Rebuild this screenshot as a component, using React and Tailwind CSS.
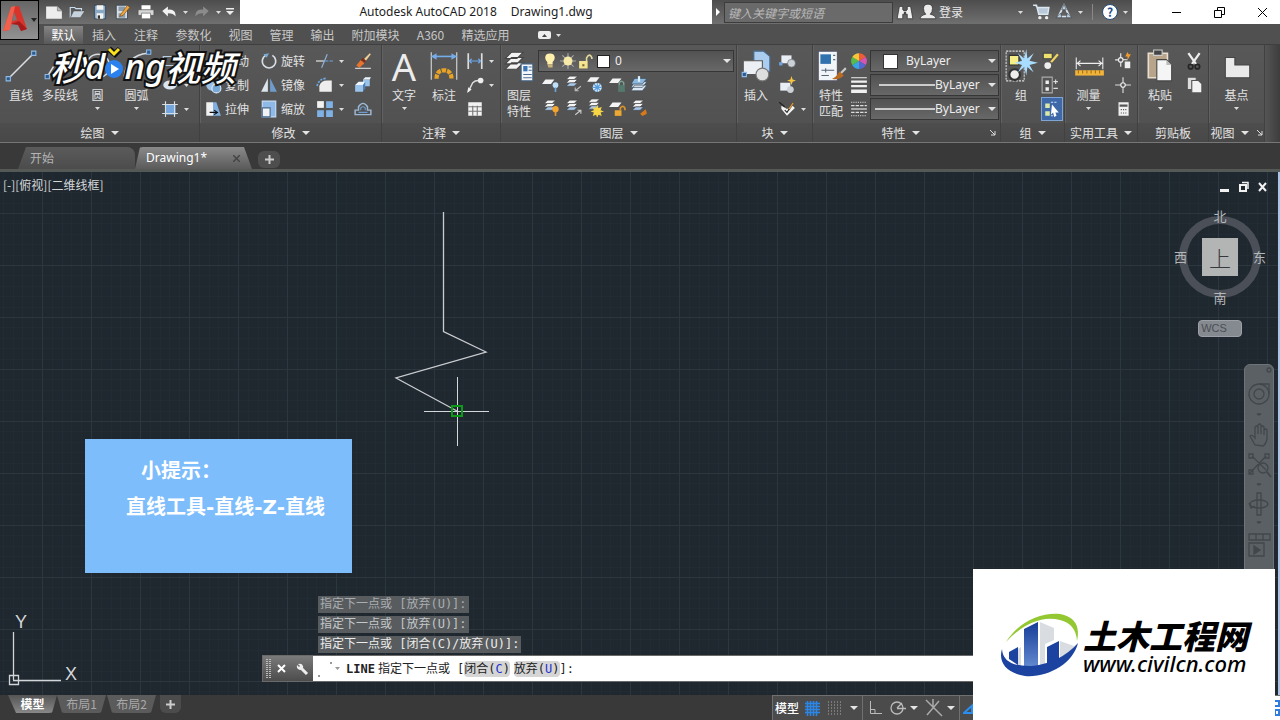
import { useState } from 'react';

const SmallIcon = ({ children }) => (
    <svg width="18" height="18" viewBox="0 0 16 16" fill="none" className="shrink-0">{children}</svg>
);
const BigIcon = ({ children }) => (
    <svg width="34" height="34" viewBox="0 0 32 32" fill="none" className="shrink-0">{children}</svg>
);

const Caret = ({ className = '' }) => (
    <svg width="8" height="4" viewBox="0 0 8 4" className={`shrink-0 fill-[#e4e4e4] ${className}`}><path d="M0 0h8L4 4z" /></svg>
);
const MiniCaret = () => (
    <svg width="5" height="3" viewBox="0 0 5 3" className="shrink-0 fill-[#dcdcdc]"><path d="M0 0h5L2.500 3z" /></svg>
);

const sheets = (y) => (
    <>
        <path d={`M5 ${y}h7l-3 3H2z`} fill="#f4f4f4" stroke="#3b3b3b" strokeWidth=".5" />
        <path d={`M5 ${y + 3}h7l-3 3H2z`} fill="#f4f4f4" stroke="#3b3b3b" strokeWidth=".5" />
        <path d={`M5 ${y + 6}h7l-3 3H2z`} fill="#a8c8ea" stroke="#3b3b3b" strokeWidth=".5" />
    </>
);

const quickTools = [
    ['新建', <><path d="M1 3h10l4 4v7H1z" fill="#ededed" /><path d="M11 3v4h4" fill="#b5b5b5" stroke="#777" strokeWidth=".6" /></>],
    ['打开', <><path d="M2 13V4h4l1 1h5v3" stroke="#c9dced" /><path d="M2 13 5 7h10l-4 6z" fill="#c7d2dc" stroke="#444" strokeWidth=".5" /></>],
    ['保存', <><path d="M3 2h10v12H3z" fill="#8aa8c4" stroke="#2d3e50" strokeWidth=".7" /><path d="M5 2h6v4H5zM5 9h6v5H5z" fill="#f4f4f4" /><path d="M6 11h2v3H6z" fill="#333" /></>],
    ['另存为', <><path d="M2 2h10v12H2z" fill="#d8dde2" stroke="#2d3e50" strokeWidth=".7" /><path d="M4 3h6v4H4zM4 9h6v4H4z" fill="#8a9cad" /><path d="m6 10 6-8 2 2-6 7-3 1z" fill="#f0a63a" stroke="#6b3c0a" strokeWidth=".5" /></>],
    ['打印', <><path d="M4 2h8v4H4z" fill="#fff" /><path d="M1 6h14v5H1z" fill="#d7d7d7" stroke="#444" strokeWidth=".5" /><path d="M4 9h8v5H4z" fill="#fff" stroke="#666" strokeWidth=".6" /></>],
];

const menuTabs = [
    { name: '默认', width: 'w-[39px]' },
    { name: '插入', width: 'w-[42px]' },
    { name: '注释', width: 'w-[42px]' },
    { name: '参数化', width: 'w-[53px]' },
    { name: '视图', width: 'w-[41px]' },
    { name: '管理', width: 'w-[41px]' },
    { name: '输出', width: 'w-[41px]' },
    { name: '附加模块', width: 'w-[65px]' },
    { name: 'A360', width: 'w-[45px]' },
    { name: '精选应用', width: 'w-[65px]' },
];

const layerTools = [
    <><path d="M3 4h8L8 8H0z" fill="#f4f4f4" /><circle cx="12" cy="9" r="2.500" fill="#bfe0fb" /><path d="M12 11v4" stroke="#6ea8dc" strokeWidth="1.500" /></>,
    <>{sheets(1)}<path d="m15 10-5 4M10 11v3h3" stroke="#bbb" /></>,
    <><path d="M4 2h8L9 6H1z" fill="#f4f4f4" /><circle cx="10" cy="11" r="4" fill="#dff0ff" /><path d="M10 7v8M6 11h8M7 8l6 6M13 8l-6 6" stroke="#5a9fdc" /></>,
    <><path d="M4 3h8L9 7H1z" fill="#f4f4f4" /><path d="M9 9h6v6H9z" fill="#56796e" /><path d="M10 9V7q2-3 4 0v2" stroke="#7ba091" strokeWidth="1.300" /></>,
    <><path d="M4 9h11l-4 5H1zM4 6h11l-4 5H1z" fill="#dce8f3" stroke="#34495c" strokeWidth=".6" /><path d="M4 3h11l-4 5H1z" fill="#8db9e0" stroke="#34495c" strokeWidth=".6" /><path d="M8 1v5" stroke="#dff0ff" strokeWidth="2" /></>,
    <>{sheets(1)}<circle cx="12" cy="9" r="2.800" fill="#f6a531" /><path d="M12 11v4" stroke="#e9952b" strokeWidth="1.500" /></>,
    <>{sheets(1)}<path d="m10 14 5-4M12 10h3v3" stroke="#ccc" /></>,
    <>{sheets(0)}<path d="m10 5 1 3 3-1-1 3 3 1-3 1 1 3-3-1-1 3-1-3-3 1 1-3-3-1 3-1-1-3 3 1z" fill="#f7d544" /></>,
    <><path d="M4 3h8L9 7H1z" fill="#f4f4f4" /><path d="M6 10h6v5H6z" fill="#eda832" /><path d="M11 10V8q2-3 4 0v2" stroke="#d8922a" strokeWidth="1.500" /></>,
    <>{sheets(1)}<path d="m9 13 5-4 1 4-4 2z" fill="#d67a1c" /></>,
];

const Tool = ({ icon, label, arrow, title, active }) => (
    <button aria-label={label || title} className={`flex h-6 items-center gap-[3px] whitespace-nowrap ${active ? 'border border-[#7fa5d4] bg-[#3f68a8] px-px' : ''}`}>
        <SmallIcon>{icon}</SmallIcon>
        {label && <span>{label}</span>}
        {arrow && <span className="pl-[2px]"><MiniCaret /></span>}
    </button>
);

const BigTool = ({ icon, lines, arrow, width }) => (
    <button className={`flex flex-col items-center ${width}`}>
        {icon}
        <span className="flex flex-col whitespace-nowrap pt-1 leading-4">{lines.map((l) => <span key={l}>{l}</span>)}</span>
        {arrow && <span className="pt-1"><MiniCaret /></span>}
    </button>
);

const Panel = ({ title, width, children, arrow = true, launcher }) => (
    <section aria-label={title} className={`flex shrink-0 flex-col border-r border-[#414141] shadow-[1px_0_0_#626262] ${width}`}>
        <div className="flex h-[78px] pt-1">{children}</div>
        <button className="flex h-[19px] w-full items-center justify-center gap-[6px] bg-linear-to-b from-[#4d4d4d] to-[#484848]">
            <span>{title}</span>
            {arrow && <Caret />}
            {launcher && <svg width="6" height="6" viewBox="0 0 6 6" className={`fill-none stroke-[#ddd] ${launcher}`}><path d="m0 0 5 5M5 1v4H1" /></svg>}
        </button>
    </section>
);

const Combo = ({ label, value, padding, children }) => (
    <div className="relative h-[22px] border border-[#363636] bg-linear-to-b from-[#525252] to-[#686868]">
        <select aria-label={label} defaultValue={value} className={`h-full w-full appearance-none bg-transparent font-['Noto_Sans','Noto_Sans_CJK_SC',sans-serif] text-xs text-[#eee] outline-none ${padding}`}>
            <option>{value}</option>
        </select>
        <div className="pointer-events-none absolute inset-0 flex items-center">{children}</div>
        <Caret className="pointer-events-none absolute right-[2px] top-2" />
    </div>
);

const TitleBar = () => (
    <header className="flex h-6 bg-white text-[#1c1c1c]">
        <div className="flex w-[201px] shrink-0 items-center gap-[5px] bg-linear-to-b from-[#4d4d4d] to-[#707070] pl-[6px]">
            {quickTools.map(([name, icon]) => (
                <button key={name} aria-label={name}><SmallIcon>{icon}</SmallIcon></button>
            ))}
            <button aria-label="放弃"><SmallIcon><path d="m2 7 5-4v3q7-1 7 6-2-3-7-3v3z" fill="#f2f2f2" /></SmallIcon></button>
            <MiniCaret />
            <button aria-label="重做"><SmallIcon><path d="m14 7-5-4v3q-7-1-7 6 2-3 7-3v3z" fill="#8b8b8b" /></SmallIcon></button>
            <MiniCaret />
            <svg width="8" height="8" viewBox="0 0 8 8" className="fill-[#eee]"><path d="M0 0h8v1.500H0zM0 3h8L4 7z" /></svg>
        </div>
        <h1 className="flex flex-1 items-center justify-center gap-[14px] whitespace-nowrap font-['Noto_Sans',sans-serif] text-xs"><span>Autodesk AutoCAD 2018</span><span>Drawing1.dwg</span></h1>
        <div className="flex w-[420px] shrink-0 items-center bg-linear-to-b from-[#4d4d4d] to-[#707070] text-[#e8e8e8]">
            <button aria-label="展开搜索" className="flex w-3 justify-center"><svg width="4" height="8" viewBox="0 0 4 8" className="fill-white"><path d="m0 0 4 4-4 4z" /></svg></button>
            <input aria-label="搜索" placeholder="键入关键字或短语" className="h-[21px] w-[169px] border border-[#3c3c3c] bg-[#6a6a6a] pl-[3px] text-xs italic outline-none placeholder:text-[#b9b9b9]" />
            <button aria-label="查找" className="ml-[3px]"><SmallIcon><path d="M3 3h3v3l1 1h2l1-1V3h3l2 11h-5v-4H6v4H1z" fill="#eee" stroke="#333" strokeWidth=".7" /><path d="M7 8h2v2H7z" fill="#444" /></SmallIcon></button>
            <button className="ml-[5px] flex items-center gap-[2px]">
                <SmallIcon><path d="M1 14q0-3 5-4-2-2-2-5 0-4 4-4t4 4q0 3-2 5 5 1 5 4z" fill="#ececec" stroke="#333" strokeWidth=".7" /></SmallIcon>登录
            </button>
            <div className="ml-auto flex items-center gap-[5px] pr-1">
                <MiniCaret />
                <button aria-label="购物车" className="ml-1"><SmallIcon><path d="M1 2h3l2 8h8l1-6H5" fill="#b9c9da" stroke="#dce6ef" strokeWidth="1.300" /><circle cx="7" cy="13" r="1.500" fill="#eee" /><circle cx="13" cy="13" r="1.500" fill="#eee" /></SmallIcon></button>
                <button aria-label="应用"><SmallIcon><path d="M8 2 3 12h10z" stroke="#d9e4ee" strokeWidth="1.500" /><path d="M8 1 6 6h4zM1 13l4-4 1 4zM15 13l-4-4-1 4z" fill="#b8cfe4" stroke="#333" strokeWidth=".5" /></SmallIcon></button>
                <MiniCaret />
                <span className="mx-1 h-4 w-px bg-[#888]" />
                <button aria-label="帮助" className="flex h-4 w-4 items-center justify-center rounded-full border border-[#294b73] bg-white text-xs font-bold text-[#1f4f8c]">?</button>
                <MiniCaret />
            </div>
        </div>
        <div className="flex w-[148px] shrink-0 items-center justify-end gap-8 pr-3">
            <button aria-label="最小化"><svg width="11" height="11" className="stroke-black"><path d="M1 5.500h9" /></svg></button>
            <button aria-label="还原"><svg width="11" height="11" className="fill-none stroke-black"><path d="M.5 3.500h7v7h-7zM3.500 3V.5h7v7H8" /></svg></button>
            <button aria-label="关闭"><svg width="11" height="11" className="stroke-black"><path d="m1 1 9 9M10 1l-9 9" /></svg></button>
        </div>
    </header>
);

const MiaoDongLogo = () => (
    <div className="pointer-events-none absolute -top-1 left-[50px] z-10 flex h-12 items-center text-[35px] font-medium italic leading-none text-white [-webkit-text-stroke:4px_#111] [paint-order:stroke_fill]">
        <span>秒</span>
        <span className="font-['Noto_Sans',sans-serif]">d</span>
        <svg width="19" height="38" viewBox="0 0 19 38" className="overflow-visible">
            <path d="m4 3 6 5 5-5" fill="none" stroke="#111" strokeWidth="6" /><path d="m4 3 5 5 5-5" fill="none" stroke="#fbe21e" strokeWidth="3" />
            <circle cx="9" cy="23" r="9" fill="#2b82ef" stroke="none" /><path d="m6 18 8 5-8 5z" fill="#fff" stroke="none" />
        </svg>
        <span className="font-['Noto_Sans',sans-serif]">ng</span>
        <span>视频</span>
    </div>
);

const Ribbon = () => (
    <div className="relative flex border-y border-t-[#3f3f3f] border-b-[#777] bg-linear-to-b from-[#585858] to-[#505050]">
        <MiaoDongLogo />
        <Panel title="绘图" width="w-[200px]">
            <BigTool width="w-[42px]" lines={['直线']} icon={<BigIcon><path d="M4 28 28 4" stroke="#d7dde3" strokeWidth="1.500" /><path d="M2 26h4v4H2zM26 2h4v4h-4z" fill="#2e5c90" stroke="#8fbbe6" /></BigIcon>} />
            <BigTool width="w-[36px]" lines={['多段线']} icon={<BigIcon><path d="M4 26 14 10h8q5 8-2 14" stroke="#d7dde3" strokeWidth="1.500" /><path d="M2 24h4v4H2z" fill="#2e5c90" stroke="#8fbbe6" /></BigIcon>} />
            <BigTool width="w-[39px]" lines={['圆']} arrow icon={<BigIcon><circle cx="16" cy="16" r="11" stroke="#d7dde3" strokeWidth="1.500" /></BigIcon>} />
            <BigTool width="w-[39px]" lines={['圆弧']} arrow icon={<BigIcon><path d="M4 26Q6 6 26 4" stroke="#d7dde3" strokeWidth="1.500" /><path d="M25 1h4v4h-4z" fill="#2e5c90" stroke="#8fbbe6" /></BigIcon>} />
            <div className="flex flex-col pl-[5px]">
                <Tool title="矩形" arrow icon={<path d="M2 4h12v8H2z" stroke="#b9cfe4" />} />
                <Tool title="椭圆" arrow icon={<><ellipse cx="8" cy="8" rx="6" ry="4" fill="#dbe6f1" /><ellipse cx="8" cy="8" rx="2" ry="1" fill="#567" /></>} />
                <Tool title="图案填充" arrow icon={<><path d="M4 4h9v9H4z" fill="#74a5dc" /><path d="M1 4h14M1 12h14M4 1v14M12 1v14" stroke="#d5dde5" /></>} />
            </div>
        </Panel>
        <Panel title="修改" width="w-[182px]">
            <div className="flex flex-col pl-1">
                <Tool label="移动" icon={<path d="M8 1v14M1 8h14M6 3l2-2 2 2M6 13l2 2 2-2" stroke="#d7dde3" />} />
                <Tool label="复制" icon={<><circle cx="7" cy="8" r="5" fill="#9cc0e4" /><circle cx="11" cy="11" r="4" fill="#78a8d8" stroke="#dcebfa" /></>} />
                <Tool label="拉伸" icon={<><path d="M2 2h6v12H2z" fill="#f1f1f1" /><path d="m8 2 3 0 4 12H8z" fill="#80afe0" /><path d="M5 11h7M9 9l3 2-3 2" stroke="#111" /></>} />
            </div>
            <div className="flex flex-col pl-[11px]">
                <Tool label="旋转" icon={<><path d="M5 3a6 6 0 1 0 6 0" stroke="#d8dfe6" strokeWidth="1.500" /><path d="m3 2 5-1-2 4z" fill="#79aada" /></>} />
                <Tool label="镜像" icon={<><path d="M7 2v12H1z" fill="#dce4ec" /><path d="M9 2v12h6z" fill="#6f9ccb" /></>} />
                <Tool label="缩放" icon={<><path d="M2 1h12v14H2z" fill="#8fb9e6" stroke="#c9def5" /><path d="M2 7h7v8H2z" fill="#f3f3f3" stroke="#47698f" /></>} />
            </div>
            <div className="flex flex-col pl-[11px]">
                <Tool title="修剪" arrow icon={<><path d="M0 8h7" stroke="#eee" /><path d="M8 8h8" stroke="#6aa6e2" strokeDasharray="3 1" /><path d="m5 14 5-12" stroke="#8fb5dc" /></>} />
                <Tool title="圆角" arrow icon={<><path d="M3 14V9q1-5 7-5h4v10z" fill="#eee" /><path d="M1 9q1-6 8-7" stroke="#6ea5dd" strokeDasharray="2 1" strokeWidth="1.500" /></>} />
                <Tool title="阵列" arrow icon={<><path d="M1 1h6v6H1z" fill="#f2f2f2" /><path d="M9 1h6v6H9zM1 9h6v6H1zM9 9h6v6H9z" fill="#80b1e5" /></>} />
            </div>
            <div className="flex flex-col pl-[10px]">
                <Tool title="删除" icon={<><path d="m6 9 8-8 1 1-7 9z" fill="#edcf96" /><path d="m2 12 4-5 3 3-4 4z" fill="#e8742b" /><path d="m6 7 2-2 3 3-2 2z" fill="#7c2f1c" /><path d="M1 14.500h14" stroke="#ddd" /></>} />
                <Tool title="分解" icon={<><path d="M1 8h7v6H1zM8 3h6v6H8z" fill="#9ac3ec" /><path d="m1 8 3-3h6L8 8zM8 3l2-2h5l-1 2z" fill="#eef6ff" /><path d="m8 8 2-3v6l-2 3z" fill="#4d7fb5" /></>} />
                <Tool title="偏移" icon={<><path d="M1 13h14V9h-3V6q-4-6-8 0v3H1z" stroke="#9fb9d4" strokeWidth="1.300" /><path d="M4 11h8M6 9V7q2-2 4 0v2" stroke="#6c9cd0" /></>} />
            </div>
        </Panel>
        <Panel title="注释" width="w-[119px]">
            <BigTool width="w-[44px]" lines={['文字']} arrow icon={<span className="h-[34px] font-['Noto_Sans',sans-serif] text-[38px] leading-[34px] text-[#ececec]">A</span>} />
            <BigTool width="w-[36px]" lines={['标注']} icon={<BigIcon><path d="M4 3v26M28 3v26" stroke="#ddd" /><path d="M4 7h24" stroke="#75adeb" strokeWidth="1.500" /><path d="m4 7 5-3v6zM28 7l-5-3v6z" fill="#75adeb" /><path d="M9 28q0-8 7-8t7 8" stroke="#e9a324" strokeWidth="4" strokeDasharray="4 1" /></BigIcon>} />
            <div className="flex flex-col pl-[4px]">
                <Tool title="线性" arrow icon={<><path d="M2 1v14M14 1v14" stroke="#ddd" strokeWidth="1.500" /><path d="M3 8h10M5 6 3 8l2 2M11 6l2 2-2 2" stroke="#71aaea" /></>} />
                <Tool title="引线" arrow icon={<><path d="m2 14 4-8q2-2 5-2" stroke="#ddd" strokeWidth="1.300" /><path d="m1 15 1-5 3 2z" fill="#eee" /><circle cx="13" cy="4" r="2.500" fill="#eee" /></>} />
                <Tool title="表格" icon={<><path d="M2 2h12v12H2z" fill="#f2f2f2" /><path d="M2 6h12M2 10h12M6 5v9M10 5v9" stroke="#777" /></>} />
            </div>
        </Panel>
        <Panel title="图层" width="w-[236px]">
            <BigTool width="w-[36px]" lines={['图层', '特性']} icon={<BigIcon><path d="M9 3h11l-6 6H3zM9 8h11l-6 6H3zM9 13h11l-6 6H3z" fill="#f2f2f2" stroke="#444" /><path d="M18 14h11v16H18z" fill="#f4f8fc" stroke="#44617f" /><path d="M20 16h4v5h-4z" fill="#3976b7" /><path d="M25 17h3M25 20h3M20 24h8M20 27h8" stroke="#4b6b8e" /></BigIcon>} />
            <div className="flex flex-1 flex-col pl-[1px] pr-[2px] pt-px">
                <Combo label="图层" value="0" padding="pl-[76px]">
                    <svg width="17" height="18" viewBox="0 0 16 16" className="ml-[3px]"><path d="M5 9Q3 7 3 5q0-4 4.500-4T12 5q0 2-2 4v2H5z" fill="#fff0ac" /><path d="M5 11h5v3H6z" fill="#c9b37a" /></svg>
                    <svg width="18" height="18" viewBox="0 0 16 16"><path d="M8 1v14M1 8h14M3 3l10 10M13 3 3 13" stroke="#aaa" /><circle cx="8" cy="8" r="4" fill="#f7e9a8" /></svg>
                    <svg width="17" height="18" viewBox="0 0 16 16"><path d="M2 8h8v7H2z" fill="#f5e591" /><path d="M5 11h2v2H5z" fill="#776c31" /><path d="M9 8V5q3-5 5 0v1" fill="none" stroke="#e3d99f" strokeWidth="1.500" /></svg>
                    <span className="ml-[3px] h-[13px] w-[13px] border border-[#222] bg-white" />
                </Combo>
                <div className="grid grid-cols-[repeat(5,22px)] pl-1">
                    {layerTools.map((icon, i) => <Tool key={i} title={`图层工具 ${i + 1}`} icon={icon} />)}
                </div>
            </div>
        </Panel>
        <Panel title="块" width="w-[76px]">
            <BigTool width="w-[38px]" lines={['插入']} icon={<BigIcon><path d="M14 2h9l6 5v14H14z" fill="#aacdf0" stroke="#4b6e93" /><path d="M4 11h18v13H4z" fill="#eceff3" stroke="#555" /><circle cx="22" cy="24" r="6" fill="#dedede" stroke="#777" /><path d="M3 22h4v4H3z" fill="#2e5c90" stroke="#8fbbe6" /></BigIcon>} />
            <div className="flex flex-col pl-[3px]">
                <Tool title="创建" icon={<><path d="M3 3h9v7H3z" fill="#e9eef4" /><circle cx="12" cy="10" r="3.500" fill="#ccd1d8" stroke="#555" strokeWidth=".5" /><path d="M1 9h3v3H1z" fill="#6fa2db" /></>} />
                <Tool title="编辑" icon={<><path d="M2 6h9v7H2z" fill="#e9eef4" /><circle cx="11" cy="12" r="3" fill="#ccd1d8" /><path d="m12 0 1 3 3 1-3 1-1 3-1-3-3-1 3-1z" fill="#f6c443" /></>} />
                <Tool title="属性" arrow icon={<><path d="m3 5 5 3 5-3 2 2-7 7-5-6z" fill="#f3f3f3" /><path d="m9 8 4-6 1 1-4 6z" fill="#f0a63a" stroke="#333" strokeWidth=".4" /><path d="m1 2 5 4M6 9l2 2 2-3" stroke="#222" /></>} />
            </div>
        </Panel>
        <Panel title="特性" width="w-[188px]" launcher="relative left-[64px]">
            <BigTool width="w-[36px]" lines={['特性', '匹配']} icon={<BigIcon><path d="M4 2h18v28H4z" fill="#f2f5f8" stroke="#556" /><path d="M6 5h10v9H6z" fill="#2f72ae" /><path d="M18 6h2M18 10h2M7 20h12M7 25h7M11 18v4" stroke="#567" /><path d="m30 18-6 6" stroke="#c8c8c8" strokeWidth="2" /><path d="m24 21 4 4q-5 5-11 3 4-1 7-7z" fill="#b86b20" /></BigIcon>} />
            <div className="flex flex-col pl-px">
                <Tool title="颜色" icon={<><path d="M8 8V1a7 7 0 0 1 6 3.500z" fill="#ef5d36" /><path d="M8 8 14 4.500a7 7 0 0 1 0 7z" fill="#d455b2" /><path d="m8 8 6 3.500A7 7 0 0 1 8 15z" fill="#5667d0" /><path d="M8 8v7a7 7 0 0 1-6-3.500z" fill="#37a6e0" /><path d="M8 8 2 11.500a7 7 0 0 1 0-7z" fill="#56bd4d" /><path d="M8 8 2 4.500A7 7 0 0 1 8 1z" fill="#f4c63a" /></>} />
                <Tool title="线宽" icon={<path d="M1 1h14v1H1zM1 4h14v2H1zM1 8h14v2H1zM1 12h14v3H1z" fill="#f0f0f0" />} />
                <Tool title="线型" icon={<><path d="M1 2h14M1 14h14" stroke="#ddd" strokeDasharray="1 1" /><path d="M1 5h14M1 11h14" stroke="#ddd" strokeDasharray="3 1" /><path d="M1 8h14" stroke="#eee" /></>} />
            </div>
            <div className="flex flex-1 flex-col gap-[2px] pl-[2px] pr-px pt-px">
                <Combo label="对象颜色" value="ByLayer" padding="pl-[35px]"><span className="ml-3 h-[15px] w-[15px] border border-[#333] bg-white" /></Combo>
                <Combo label="线宽选择" value="ByLayer" padding="pl-16"><span className="ml-2 h-[2px] w-[56px] bg-[#ccc]" /></Combo>
                <Combo label="线型选择" value="ByLayer" padding="pl-16"><span className="ml-1 h-[2px] w-[60px] bg-[#ccc]" /></Combo>
            </div>
        </Panel>
        <Panel title="组" width="w-[64px]">
            <BigTool width="w-[40px]" lines={['组']} icon={<BigIcon><path d="M2 2h17v28H2z" stroke="#ddd" strokeDasharray="2 1" /><path d="M5 6h9v9H5z" fill="#f6ee87" stroke="#333" /><circle cx="10" cy="24" r="5" fill="#eee" stroke="#333" strokeWidth="2" /><path d="m21 0 1 9 6-5-4 7 8 2-8 2 4 7-6-5-1 8-2-8-6 5 4-7-7-2 7-2-4-7 6 5z" fill="#a9ddff" /></BigIcon>} />
            <div className="flex flex-col">
                <Tool title="解除编组" icon={<><path d="M2 1h8v5H2z" fill="#eee16d" stroke="#444" /><circle cx="6" cy="12" r="3" fill="#eee" /><path d="m9 9 6-7" stroke="#f3d562" strokeWidth="2" /></>} />
                <Tool title="组编辑" icon={<><path d="M1 1h9v14H1z" stroke="#aaa" /><path d="M4 4h3v3H4zM4 10h3v3H4z" fill="#eee" /><path d="M11 5h4M13 3v4M11 11h4" stroke="#ddd" /></>} />
                <Tool title="启用组选择" active icon={<><path d="M2 3h4v4H2zM2 10h4v4H2z" fill="#dce9a4" /><path d="M7 2h5M7 14h3" stroke="#c5dcff" strokeDasharray="2 1" /><path d="m8 4 6 7-3 0 1 3-2 1-1-4-2 2z" fill="#fff" /></>} />
            </div>
        </Panel>
        <Panel title="实用工具" width="w-[73px]">
            <BigTool width="w-[47px]" lines={['测量']} arrow icon={<BigIcon><path d="M4 8v11M29 8v11M4 13.500h25M8 11l-3 2.500L8 16M25 11l3 2.500-3 2.500" stroke="#eee" /><path d="M3 20h27v5H3z" fill="#f0b43b" /><path d="M6 20v3M10 20v3M14 20v3M18 20v3M22 20v3M26 20v3" stroke="#a36f12" /></BigIcon>} />
            <div className="flex flex-col pl-[2px]">
                <Tool title="快速选择" icon={<><path d="M6 1v12M1 7h11" stroke="#eee" /><circle cx="6" cy="7" r="2" fill="#555" stroke="#eee" /><path d="M9 8h6v7H9z" fill="#eee" stroke="#555" /><path d="m12 0-2 4h2v3l3-5h-2z" fill="#f39b2f" /></>} />
                <Tool title="点" icon={<><path d="M8 1v14M1 8h14" stroke="#ddd" /><circle cx="8" cy="8" r="2" fill="#555" stroke="#eee" /></>} />
                <Tool title="计算器" icon={<><path d="M4 2h9v12H4z" fill="#f0f0f0" /><path d="M5 4h7v2H5zM6 8h1v1H6zM8 8h1v1H8zM10 8h1v1h-1zM6 11h1v1H6zM8 11h1v1H8zM10 11h1v1h-1z" fill="#555" /></>} />
            </div>
        </Panel>
        <Panel title="剪贴板" width="w-[71px]" arrow={false}>
            <BigTool width="w-[44px]" lines={['粘贴']} arrow icon={<BigIcon><path d="M5 4h18v23H5z" fill="#b8a48b" stroke="#eadfce" strokeWidth="1.500" /><path d="M10 1h8v5h-8z" fill="#444" stroke="#ccc" /><path d="M13 10h9l5 5v15H13z" fill="#f5f5f5" stroke="#444" /><path d="M22 10v5h5" fill="#bbb" /></BigIcon>} />
            <div className="flex flex-col pl-[3px]">
                <Tool title="剪切" icon={<><path d="m3 1 7 10M13 1 6 11" stroke="#eee" strokeWidth="2" /><circle cx="5" cy="13" r="2" stroke="#252525" strokeWidth="1.500" /><circle cx="11" cy="13" r="2" stroke="#252525" strokeWidth="1.500" /></>} />
                <Tool title="复制剪裁" icon={<><path d="M2 1h8v11H2z" fill="#ddd" stroke="#555" /><path d="M6 4h6l3 3v8H6z" fill="#f3f3f3" stroke="#555" /></>} />
            </div>
        </Panel>
        <Panel title="视图" width="w-[56px]" launcher="ml-[2px]">
            <BigTool width="w-full" lines={['基点']} arrow icon={<BigIcon><path d="M5 8h9v7h14v12H5z" fill="#e9e9e9" stroke="#444" /></BigIcon>} />
        </Panel>
        <div className="flex-1 bg-linear-to-r from-[#555] to-[#3d3d3d]" />
    </div>
);

const FileTabs = () => (
    <nav aria-label="图形" className="flex h-[29px] items-end border-b-3 border-[#555956] bg-[#393939] pl-[18px] text-xs">
        <button className="h-[22px] w-[117px] rounded-t-lg bg-linear-to-b from-[#5b5b5b] to-[#4c4c4c] pl-3 text-left text-[#b5b5b5] [clip-path:polygon(8px_0,100%_0,100%_100%,0_100%)]">开始</button>
        <div className="flex h-[22px] w-[117px] items-center rounded-t-lg bg-linear-to-b from-[#8a8a8a] to-[#5b5b5b] pl-[11px] text-white [clip-path:polygon(5px_0,109px_0,100%_100%,0_100%)]">
            <button className="font-['Noto_Sans',sans-serif]">Drawing1*</button>
            <button aria-label="关闭图形" className="ml-auto mr-3"><svg width="7" height="7" className="stroke-[#444]"><path d="m0 0 7 7M7 0 0 7" strokeWidth="1.500" /></svg></button>
        </div>
        <button aria-label="新图形" className="mb-px ml-[6px] flex h-[17px] w-[22px] items-center justify-center rounded-md bg-[#4e4e4e]"><svg width="9" height="9" className="stroke-[#ccc]"><path d="M4.500 0v9M0 4.500h9" strokeWidth="2" /></svg></button>
    </nav>
);

const ViewCube = () => (
    <div className="absolute right-[12px] top-[36px] flex w-[92px] flex-col items-center text-[13px] text-[#b4b7ba]">
        <svg width="92" height="92" className="absolute top-[3px]"><circle cx="46" cy="46" r="37" fill="none" stroke="#4b5058" strokeWidth="8" /></svg>
        <span className="relative leading-4">北</span>
        <div className="relative flex w-full items-center justify-between py-[14px]">
            <span>西</span>
            <button className="flex h-[38px] w-[36px] items-center justify-center bg-[#b3b5b4] text-[22px] font-light leading-none text-[#35393d]">上</button>
            <span>东</span>
        </div>
        <span className="relative leading-4">南</span>
        <button className="mt-[14px] h-[17px] w-11 rounded-sm border border-[#9da1a7] bg-[#858990] pr-3 font-['Liberation_Sans',sans-serif] text-[11px] leading-none text-[#4b4f55]">WCS</button>
    </div>
);

const NavBar = () => (
    <div className="absolute bottom-0 right-1 top-[192px] w-[30px] rounded-t-md border border-[#6f7478] bg-[#5b6064]">
        <svg width="28" height="200" viewBox="0 0 28 200" fill="none" className="stroke-[#41474b]" strokeWidth="1.300">
            <circle cx="24" cy="5" r="2" />
            <circle cx="14" cy="29" r="10" /><circle cx="14" cy="29" r="5" /><path d="M14 19h10v10" />
            <path d="M12 49h4l-2 1z" />
            <path d="M10 80 5 71q2-2 5 2V62q2-2 3 0v7-9q2-2 3 0v9-7q2-2 3 0v8-5q2-2 3 0v9q-1 5-4 7z" />
            <path d="m7 91 14 14M21 91 5 108M4 89h4v4H4zM20 89h4v4h-4zM4 105h4v4H4z" /><circle cx="18" cy="103" r="5" /><path d="m22 107 4 5" strokeWidth="2" />
            <path d="M12 119h4l-2 1z" />
            <path d="M12 128h4v22h-4z" /><ellipse cx="14" cy="139" rx="9" ry="4" /><path d="m4 138 2 5 4-2" />
            <path d="M12 157h4l-2 1z" />
            <path d="M4 169h7v6H4zM11 169h7v6h-7zM18 169h7v6h-7zM4 178h15v13H4z" /><path d="m9 181 6 4-6 4z" fill="#41474b" />
        </svg>
    </div>
);

const history = [
    { text: '指定下一点或 [放弃(U)]:', tone: 'text-[#a9adb0]' },
    { text: '指定下一点或 [放弃(U)]:', tone: 'text-[#c4c7c9]' },
    { text: '指定下一点或 [闭合(C)/放弃(U)]:', tone: 'text-[#ececec]' },
];

const CommandLine = () => {
    const [command, setCommand] = useState('');
    return (
        <div className="absolute bottom-[13px] left-[262px] right-[8px] font-['DejaVu_Sans_Mono','Noto_Sans_CJK_SC',monospace] text-xs">
            <div className="flex flex-col items-start gap-[3px] pb-[2px] pl-14">
                {history.map((h, i) => <p key={i} className={`h-[17px] whitespace-pre bg-[#585c5f] px-[2px] leading-[17px] ${h.tone}`}>{h.text}</p>)}
            </div>
            <div className="flex h-[27px] border border-[#6a6a6a] bg-white text-[#222]">
                <div className="flex w-[50px] items-center gap-[5px] bg-linear-to-b from-[#7b7b7b] to-[#4c4c4c] pl-[3px]">
                    <svg width="6" height="19"><path d="M1 0v19M4 0v19" stroke="#bbb" strokeWidth="2" strokeDasharray="1 1" /></svg>
                    <button aria-label="关闭命令行"><svg width="9" height="9" className="stroke-white"><path d="m1 1 7 7M8 1 1 8" strokeWidth="2" /></svg></button>
                    <button aria-label="自定义" className="ml-1"><svg width="14" height="14" viewBox="0 0 14 14" fill="none"><path d="m6 6 6 6" stroke="#eee" strokeWidth="3" /><path d="M3 2 5 4 4 5 2 3q-1 4 3 5 4-1 3-4-1-3-5-2z" fill="#eee" /></svg></button>
                </div>
                <div className="flex flex-1 items-center">
                    <svg width="33" height="20" fill="#999"><path d="M5 16h2v2H5zM17 3h2v2h-2zM22 8h5l-2.500 3z" /></svg>
                    <b className="mr-[3px]">LINE</b>
                    <span className="mr-[7px]">指定下一点或</span>
                    <span>[</span>
                    <button className="rounded-sm bg-[#d5d5d5]">闭合(<b className="font-normal text-[#1d2fd0]">C</b>)</button>
                    <button className="ml-1 rounded-sm bg-[#d5d5d5]">放弃(<b className="font-normal text-[#1d2fd0]">U</b>)</button>
                    <span>]:</span>
                    <input aria-label="命令" value={command} onChange={(e) => setCommand(e.target.value)} className="min-w-0 flex-1 bg-transparent pl-1 outline-none" />
                </div>
            </div>
        </div>
    );
};

const DrawingArea = () => (
    <main className="relative min-h-[523px] flex-1 overflow-hidden border-r-2 border-[#a9c4e6] bg-[#1f272f]">
        <svg className="absolute inset-0 h-full w-full" fill="none">
            <defs>
                <pattern id="minor" width="49" height="52" patternUnits="userSpaceOnUse" x="42" y="41">
                    <path d="M10.500 0v52M20.500 0v52M29.500 0v52M39.500 0v52M0 10.500h49M0 21.500h49M0 31.500h49M0 42.500h49" stroke="#222b33" />
                    <path d="M.5 0v52M0 .5h49" stroke="#2b363f" />
                </pattern>
            </defs>
            <rect width="100%" height="100%" fill="url(#minor)" />
            <path d="M443.500 40v119.500L486 180 396 206l61 33" stroke="#c9cdd0" strokeWidth="1.300" />
            <path d="M424 239.500h65M457.500 205v69" stroke="#d5d8da" />
            <path d="M452 234h10v10h-10z" stroke="#0c9a17" strokeWidth="2" />
        </svg>
        <div className="absolute left-[3px] top-[5px] text-xs text-[#d4d7d9]"><button>[-]</button><button>[俯视]</button><button>[二维线框]</button></div>
        <div className="absolute right-[10px] top-[9px] flex items-center gap-[9px]">
            <button aria-label="最小化图形"><svg width="10" height="11"><path d="M0 8h9v3H0z" fill="#f2f2f2" /></svg></button>
            <button aria-label="还原图形"><svg width="10" height="11" fill="none" stroke="#f2f2f2"><path d="M1 4h6v6H1z" strokeWidth="2" /><path d="M3 1.500h6V8" strokeWidth="1.500" /></svg></button>
            <button aria-label="关闭图形窗口"><svg width="10" height="11"><path d="m1 2 7 8M8 2l-7 8" stroke="#f2f2f2" strokeWidth="2" /></svg></button>
        </div>
        <ViewCube />
        <NavBar />
        <aside className="absolute left-[85px] top-[267px] h-[134px] w-[267px] bg-[#7dbdfb] pt-[14px] font-['DejaVu_Sans','Noto_Sans_CJK_SC',sans-serif] text-[20px] font-bold leading-9 text-white">
            <p className="pl-14">小提示：</p>
            <p className="whitespace-nowrap pl-[41px]">直线工具-直线-Z-直线</p>
        </aside>
        <svg width="90" height="90" className="absolute bottom-0 left-0" fill="none" stroke="#d3d6d8">
            <path d="M13.500 27v48M9.500 70.500h9v9h-9zM13 75.500h48" strokeWidth="1.300" />
            <text x="65" y="75" fontSize="18" stroke="none" className="fill-[#d3d6d8] font-['Liberation_Sans',sans-serif]">X</text>
            <text x="15" y="23" fontSize="18" stroke="none" className="fill-[#d3d6d8] font-['Liberation_Sans',sans-serif]">Y</text>
        </svg>
        <CommandLine />
    </main>
);

const StatusBar = () => (
    <footer className="flex h-[25px] items-start bg-[#393939] pl-2 text-xs text-[#a9a9a9]">
        <button className="h-[18px] w-[49px] rounded-b-lg bg-linear-to-b from-[#555] to-[#888] font-bold leading-[18px] text-white [clip-path:polygon(0_0,100%_0,44px_100%,8px_100%)]">模型</button>
        <button className="h-[18px] w-[49px] rounded-b-lg bg-[#5b5b5b] leading-[18px] [clip-path:polygon(0_0,100%_0,44px_100%,5px_100%)]">布局1</button>
        <button className="ml-px h-[18px] w-[49px] rounded-b-lg bg-[#5b5b5b] leading-[18px] [clip-path:polygon(0_0,100%_0,44px_100%,5px_100%)]">布局2</button>
        <button aria-label="新建布局" className="ml-1 flex h-[18px] w-[21px] items-center justify-center rounded-b-md bg-[#4c4c4c]"><svg width="9" height="9" className="stroke-[#ccc]"><path d="M4.500 0v9M0 4.500h9" strokeWidth="2" /></svg></button>
        <div className="ml-auto flex h-[25px] w-[508px] items-center border-l border-t border-[#707070] bg-[#4b4b4b]">
            <button className="w-[28px] font-medium text-white">模型</button>
            <button aria-label="栅格" className="ml-1"><svg width="15" height="15"><path d="M0 2.500h15M0 5.500h15M0 8.500h15M0 11.500h15M2.500 0v15M5.500 0v15M8.500 0v15M11.500 0v15" stroke="#2a86e8" strokeWidth="1.500" /></svg></button>
            <button aria-label="捕捉" className="ml-2"><svg width="15" height="15"><path d="M0 1h15M0 4h15M0 7h15M0 10h15M0 13h15" stroke="#aaa" strokeDasharray="1 2" /></svg></button>
            <Caret className="ml-[7px]" />
            <span className="ml-1 h-full w-px bg-[#707070]" />
            <button aria-label="正交" className="ml-[6px]"><svg width="13" height="14" fill="none" stroke="#bbb"><path d="M1.500 0v12.500H13M2 8.500h4v4" /></svg></button>
            <button aria-label="极轴" className="ml-2"><svg width="16" height="16" fill="none" stroke="#bbb" strokeWidth="1.300"><circle cx="7" cy="8" r="6" /><path d="M7 8.500h9M7 8l5-5" /></svg></button>
            <Caret className="ml-1" />
            <button aria-label="等轴测" className="ml-[7px]"><svg width="18" height="18" fill="none" stroke="#aaa" strokeWidth="1.500"><path d="m1 1 16 16M8 0v8M14 2 2 16" /></svg></button>
            <Caret className="ml-1" />
            <span className="ml-1 h-full w-px bg-[#707070]" />
            <button aria-label="对象捕捉追踪" className="ml-[3px]"><svg width="14" height="14" fill="none" stroke="#2c8df0" strokeWidth="2"><path d="M13 1 1 12h12M9 5v7" /></svg></button>
            <button aria-label="全屏" className="ml-auto flex h-full w-[18px] items-center justify-end bg-white"><svg width="15" height="16" fill="none" stroke="#2b7de0" strokeWidth="2"><path d="M1 5V1h4M10 1h4v5h-4M14 10v5h-4v-5zM5 15H1v-4" /></svg></button>
        </div>
    </footer>
);

const CivilLogo = () => (
    <a href="#civilcn" aria-label="土木工程网" className="absolute bottom-0 right-[5px] z-20 flex h-[151px] w-[302px] items-center bg-white pl-[26px] text-black">
        <svg width="84" height="68" viewBox="0 0 84 68" className="shrink-0">
            <defs><linearGradient id="tower" x1="0" y1="0" x2="0" y2="1"><stop offset="0" stopColor="#163c98" /><stop offset="1" stopColor="#6288ce" /></linearGradient></defs>
            <path d="M7 31C20 10 43 1 61 3q22 4 17 27-1-17-17-21C42 4 23 14 7 31z" fill="#94c832" />
            <path d="m10 41 9-5v18l-9-6zM48 36l12-6v23l-12 4z" fill="#1b439f" />
            <path d="m25 18 14-7v44H25z" fill="url(#tower)" />
            <path d="m41 11 14 6v12l-9 4v22h-5zM61 30l14 5-2 8-12 8zM19 38l3-2v20l-3-2z" fill="#d9dde2" />
            <path d="M3 38q1 18 30 17 28-3 46-23C74 53 48 67 26 65 7 62-1 51 3 38z" fill="#1b439f" />
        </svg>
        <div className="flex flex-col whitespace-nowrap pt-[5px] italic">
            <span className="text-[33px] font-black leading-8">土木工程网</span>
            <span className="font-['Noto_Sans',sans-serif] text-[22px] font-medium leading-6">www.civilcn.com</span>
        </div>
    </a>
);

const App = () => {
    const [activeTab, setActiveTab] = useState('默认');

    return (
        <div className="relative flex min-h-screen flex-col overflow-hidden bg-[#393939] font-['Noto_Sans_CJK_SC',sans-serif] text-xs text-[#e2e2e2]">
            <div className="flex bg-[#505050]">
                <button aria-label="应用程序菜单" className="flex h-10 w-[39px] shrink-0 items-center border border-black bg-linear-to-b from-[#666] to-[#929292] pl-[2px]">
                    <svg width="25" height="32" viewBox="0 0 25 32"><path d="m8 3 8-1 8 23-6 2-3-8-7 1-2 6-6 1z" fill="#d7352b" /><path d="m8 3 4-1-5 24-7 1z" fill="#f0604d" /><path d="m11 8 3 8-5 1z" fill="#777" /><path d="m8 20 8-3 8 8-6 2-3-6z" fill="#a81b1d" /></svg>
                    <span className="pl-[3px]"><svg width="6" height="4" className="fill-[#222]"><path d="M0 0h6L3 4z" /></svg></span>
                </button>
                <div className="min-w-0 flex-1">
                    <TitleBar />
                    <nav aria-label="功能区" className="flex h-5 items-end pl-[5px]">
                        {menuTabs.map((t) => (
                            <button key={t.name} onClick={() => setActiveTab(t.name)} className={`h-[18px] whitespace-nowrap leading-[18px] ${t.width} ${activeTab === t.name ? 'bg-linear-to-b from-[#858585] to-[#595959] text-white' : 'text-[#c8c8c8]'}`}>{t.name}</button>
                        ))}
                        <button aria-label="最小化功能区" className="ml-5 flex h-[18px] items-center gap-[5px]"><svg width="13" height="8"><rect width="13" height="8" rx="2" fill="#eee" /><path d="M4 6h5L6.500 3z" fill="#444" /></svg><MiniCaret /></button>
                    </nav>
                </div>
            </div>
            <Ribbon />
            <FileTabs />
            <DrawingArea />
            <StatusBar />
            <CivilLogo />
        </div>
    );
};

export default App;
